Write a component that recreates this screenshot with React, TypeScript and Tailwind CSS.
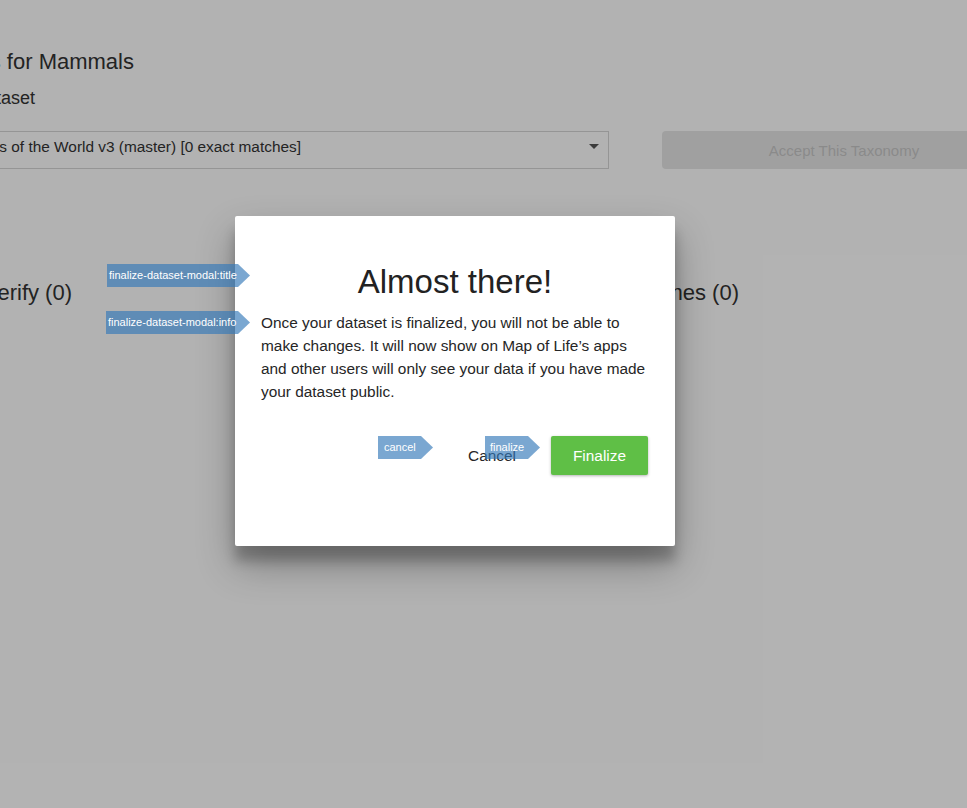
import React from "react";

function Tag({ label, className }: { label: string; className: string }) {
  return (
    <div
      className={`absolute flex h-[23px] items-center bg-[rgba(50,120,185,0.65)] text-[11px] leading-none text-white [clip-path:polygon(0_0,calc(100%-12px)_0,100%_50%,calc(100%-12px)_100%,0_100%)] ${className}`}
    >
      <span className="whitespace-nowrap">{label}</span>
    </div>
  );
}

function FinalizeModal() {
  return (
    <div className="absolute left-[235px] top-[216px] h-[330px] w-[440px] rounded-[2px] bg-white px-[26px] pt-[48px] shadow-[0_19px_38px_rgba(0,0,0,0.30),0_15px_12px_rgba(0,0,0,0.22)]">
      <h2 className="text-center text-[33px] leading-[36px] text-[#222]">Almost there!</h2>
      <p className="mt-[11px] text-[15.4px] leading-[23px] text-[#262626]">
        Once your dataset is finalized, you will not be able to make changes. It will now show on Map of Life’s apps and other users will only see your data if you have made your dataset public.
      </p>
      <div className="mt-[33px] flex items-center justify-end pr-px">
        <button className="h-[39px] px-[16px] text-[15.4px] text-[#262626]">Cancel</button>
        <button className="ml-[19px] h-[39px] w-[97px] rounded-[2px] bg-[#5fbf46] text-[15.4px] text-white shadow-[0_1px_3px_rgba(0,0,0,0.3)]">
          Finalize
        </button>
      </div>
    </div>
  );
}

export default function App() {
  return (
    <div className="relative h-[808px] w-full overflow-hidden bg-white font-['Liberation_Sans',Arial,sans-serif] text-[#333]">
      <div className="pt-[49px]">
        <div className="flex w-[134px] justify-end">
          <h1 className="shrink-0 whitespace-nowrap text-[22px] leading-[26px]">Taxonomic Matches for Mammals</h1>
        </div>
        <div className="mt-[12px] flex w-[35px] justify-end">
          <div className="shrink-0 whitespace-nowrap text-[18px] leading-[22px]">Reference dataset</div>
        </div>

        <div className="mt-[22px] flex items-start">
          <div className="flex h-[38px] w-[609px] shrink-0 items-start border border-l-0 border-[#d6d6d6]">
            <div className="flex w-[301px] shrink-0 justify-end pt-[5px]">
              <span className="shrink-0 whitespace-nowrap text-[15.4px] leading-[20px]">
                Mammals of the World v3 (master) [0 exact matches]
              </span>
            </div>
            <div className="ml-auto mr-[9px] mt-[12px] h-0 w-0 border-x-[5px] border-t-[5px] border-x-transparent border-t-[#555]" />
          </div>
          <button className="ml-[53px] flex h-[38px] w-[364px] shrink-0 items-center justify-center rounded-[4px] bg-[#e6e6e6] pt-[2px] text-[15px] text-[#c6c6c6]">
            Accept This Taxonomy
          </button>
        </div>

        <div className="mt-[111px] flex items-start">
          <div className="flex w-[72px] shrink-0 justify-end">
            <span className="shrink-0 whitespace-nowrap text-[22px] leading-[26px]">Needs Verify (0)</span>
          </div>
          <div className="flex w-[667px] shrink-0 justify-end">
            <span className="shrink-0 whitespace-nowrap text-[22px] leading-[26px]">Unmatched Names (0)</span>
          </div>
        </div>
      </div>

      <div className="absolute inset-0 bg-black/30" />

      <FinalizeModal />

      <Tag label="finalize-dataset-modal:title" className="left-[107px] top-[264px] w-[143px] pl-[2px]" />
      <Tag label="finalize-dataset-modal:info" className="left-[106px] top-[311px] w-[144px] pl-[2px]" />
      <Tag label="cancel" className="left-[378px] top-[436px] w-[55px] pl-[6px]" />
      <Tag label="finalize" className="left-[485px] top-[436px] w-[55px] pl-[5px]" />
    </div>
  );
}
